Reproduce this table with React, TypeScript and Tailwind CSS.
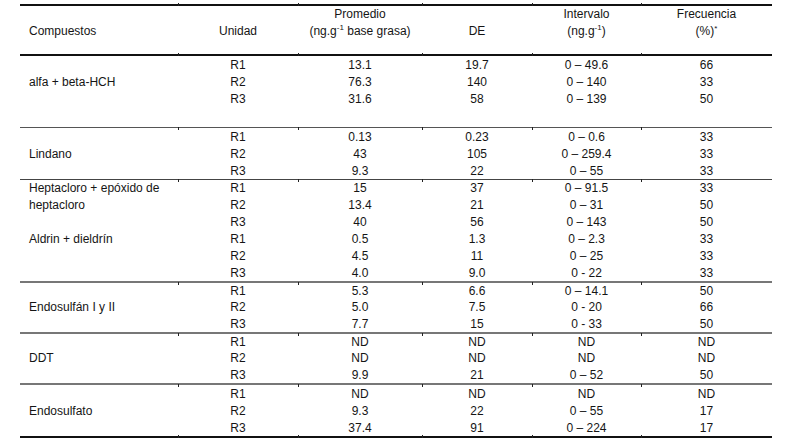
import React from "react";

type Row = { name?: string; u: string; p: string; de: string; i: string; f: string };
type Group = { cls: string; rows: Row[] };

const groups: Group[] = [
  {
    cls: "h-[71px] pb-[20px]",
    rows: [
      { u: "R1", p: "13.1", de: "19.7", i: "0 – 49.6", f: "66" },
      { name: "alfa + beta-HCH", u: "R2", p: "76.3", de: "140", i: "0 – 140", f: "33" },
      { u: "R3", p: "31.6", de: "58", i: "0 – 139", f: "50" },
    ],
  },
  {
    cls: "h-[52px] border-t border-[#555]",
    rows: [
      { u: "R1", p: "0.13", de: "0.23", i: "0 – 0.6", f: "33" },
      { name: "Lindano", u: "R2", p: "43", de: "105", i: "0 – 259.4", f: "33" },
      { u: "R3", p: "9.3", de: "22", i: "0 – 55", f: "33" },
    ],
  },
  {
    cls: "h-[102px] border-t border-[#444]",
    rows: [
      { name: "Heptacloro + epóxido de", u: "R1", p: "15", de: "37", i: "0 – 91.5", f: "33" },
      { name: "heptacloro", u: "R2", p: "13.4", de: "21", i: "0 – 31", f: "50" },
      { u: "R3", p: "40", de: "56", i: "0 – 143", f: "50" },
      { name: "Aldrin + dieldrín", u: "R1", p: "0.5", de: "1.3", i: "0 – 2.3", f: "33" },
      { u: "R2", p: "4.5", de: "11", i: "0 – 25", f: "33" },
      { u: "R3", p: "4.0", de: "9.0", i: "0 - 22", f: "33" },
    ],
  },
  {
    cls: "h-[51px] border-t-2 border-[#777]",
    rows: [
      { u: "R1", p: "5.3", de: "6.6", i: "0 – 14.1", f: "50" },
      { name: "Endosulfán I y II", u: "R2", p: "5.0", de: "7.5", i: "0 - 20", f: "66" },
      { u: "R3", p: "7.7", de: "15", i: "0 - 33", f: "50" },
    ],
  },
  {
    cls: "h-[51px] border-t-2 border-[#777]",
    rows: [
      { u: "R1", p: "ND", de: "ND", i: "ND", f: "ND" },
      { name: "DDT", u: "R2", p: "ND", de: "ND", i: "ND", f: "ND" },
      { u: "R3", p: "9.9", de: "21", i: "0 – 52", f: "50" },
    ],
  },
  {
    cls: "h-[53px] border-t-2 border-[#777]",
    rows: [
      { u: "R1", p: "ND", de: "ND", i: "ND", f: "ND" },
      { name: "Endosulfato", u: "R2", p: "9.3", de: "22", i: "0 – 55", f: "17" },
      { u: "R3", p: "37.4", de: "91", i: "0 – 224", f: "17" },
    ],
  },
];

const tickCls = [
  "left-[158px]",
  "left-[278px]",
  "left-[402px]",
  "left-[512px]",
  "left-[621px]",
];

function Ticks() {
  return (
    <>
      {tickCls.map((c) => (
        <span key={c} className={`absolute top-[-1px] w-px h-[3px] bg-[#222] ${c}`} />
      ))}
    </>
  );
}

function Line() {
  return (
    <div className="relative w-full h-[2px] bg-[#111]">
      <Ticks />
    </div>
  );
}

const sup = "text-[8px] relative top-[-5px] leading-none";

export default function App() {
  return (
    <div className="w-[811px] h-[444px] bg-white text-[#151515] text-[12px] pt-[4px] font-['Liberation_Sans',Arial,sans-serif]">
      <div className="ml-[20px] w-[752px]">
        <Line />
        <div className="flex h-[48px] leading-[16.5px]">
          <div className="flex flex-col w-[158px] pl-[9px]">
            <div>&nbsp;</div>
            <div>Compuestos</div>
          </div>
          <div className="flex flex-col items-center w-[120px]">
            <div>&nbsp;</div>
            <div>Unidad</div>
          </div>
          <div className="flex flex-col items-center w-[124px]">
            <div>Promedio</div>
            <div>
              (ng.g<sup className={sup}>-1</sup> base grasa)
            </div>
          </div>
          <div className="flex flex-col items-center w-[110px]">
            <div>&nbsp;</div>
            <div>DE</div>
          </div>
          <div className="flex flex-col items-center w-[109px]">
            <div>Intervalo</div>
            <div>
              (ng.g<sup className={sup}>-1</sup>)
            </div>
          </div>
          <div className="flex flex-col items-center w-[131px]">
            <div>Frecuencia</div>
            <div>
              (%)<sup className="text-[8px] relative top-[-4px] leading-none">*</sup>
            </div>
          </div>
        </div>
        <Line />
        {groups.map((g, gi) => (
          <div key={gi} className={`relative flex flex-col ${g.cls}`}>
            {gi > 0 && (
              <div className="absolute top-0 left-0 w-full">
                <Ticks />
              </div>
            )}
            {g.rows.map((r, ri) => (
              <div key={ri} className="flex flex-1 items-center leading-none">
                <div className="w-[158px] pl-[9px] whitespace-nowrap">{r.name ?? ""}</div>
                <div className="w-[120px] text-center">{r.u}</div>
                <div className="w-[124px] text-center">{r.p}</div>
                <div className="w-[110px] text-center">{r.de}</div>
                <div className="w-[109px] text-center">{r.i}</div>
                <div className="w-[131px] text-center">{r.f}</div>
              </div>
            ))}
          </div>
        ))}
        <Line />
      </div>
    </div>
  );
}
